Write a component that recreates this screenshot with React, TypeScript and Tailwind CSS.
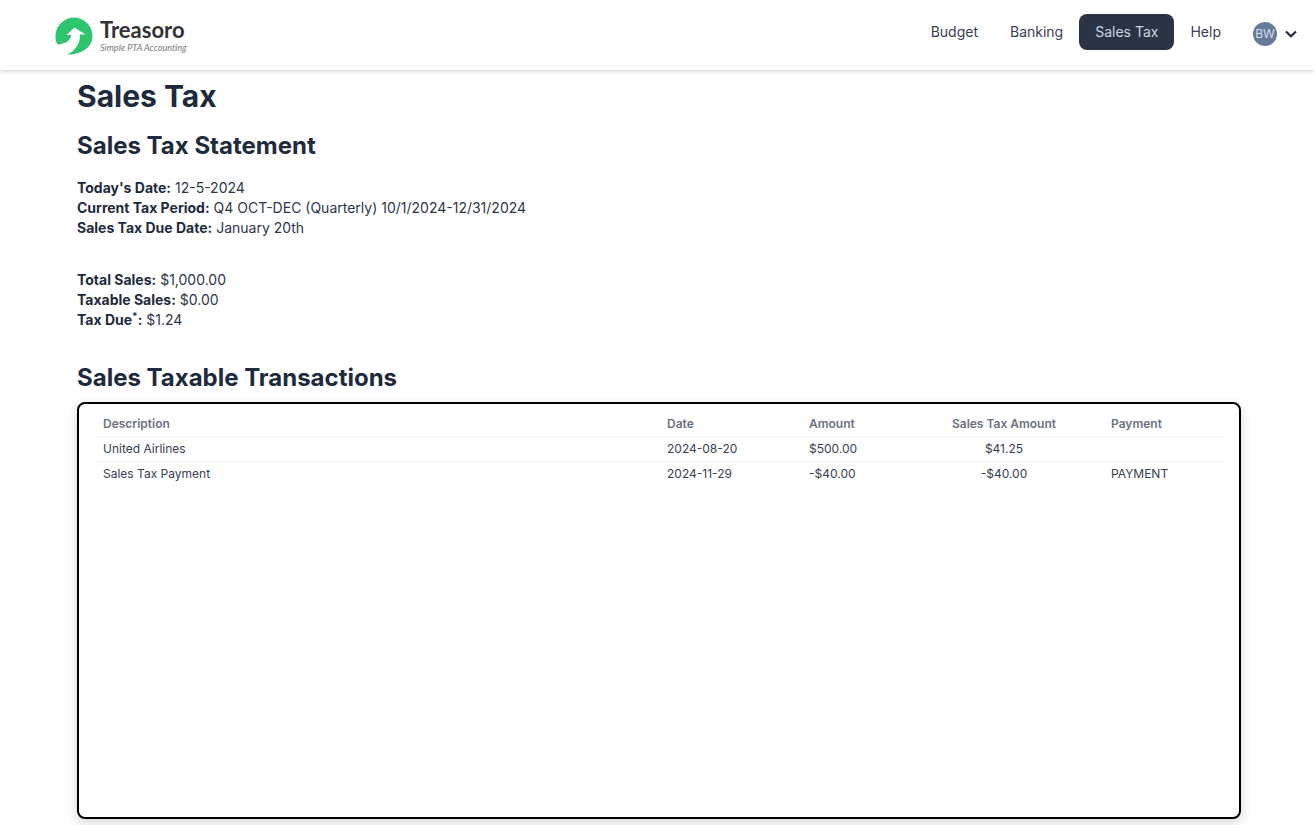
import React from "react";

function Logo() {
  return (
    <div className="flex items-center gap-[7px] mt-[2px]">
      <svg width="38" height="38" viewBox="0 0 38 38">
        <path fill="#2fc46e" d="M12 37.500C22 38 37.500 33 37.500 19A18.500 18.500 0 0 0 .5 19C.5 22 1 25 2.500 27.500C8 27 16 25 16 18L11.500 18L19.500 10.500L30.500 17.500L25 17.500C25.500 27 19 35 12 37.500Z" />
      </svg>
      <div className="flex flex-col -mt-[2px]">
        <span className="text-[22px] leading-[24px] font-bold text-[#333336] [font-family:'Lato',sans-serif]">Treasoro</span>
        <span className="text-[9.1px] leading-[11px] italic text-[#77797c] [font-family:'Lato',sans-serif]">Simple PTA Accounting</span>
      </div>
    </div>
  );
}

function NavItem({ label, active }: { label: string; active?: boolean }) {
  return (
    <a className={active ? "rounded-lg bg-[#2a3444] px-4 h-9 flex items-center text-sm text-[#cbd5e0]" : "px-4 h-9 flex items-center text-sm text-[#374151]"}>
      {label}
    </a>
  );
}

const rows = [
  { d: "United Airlines", date: "2024-08-20", a: "$500.00", s: "$41.25", p: "" },
  { d: "Sales Tax Payment", date: "2024-11-29", a: "-$40.00", s: "-$40.00", p: "PAYMENT" },
];

export default function App() {
  return (
    <div className="h-[825px] overflow-hidden bg-white text-[#1e2b3c] [font-family:'Inter',sans-serif]">
      <header className="h-[70px] bg-white shadow-[0_1px_4px_rgba(0,0,0,0.2)] flex items-center justify-between pl-[55px] pr-[18px] relative">
        <Logo />
        <nav className="flex items-center mb-[6px]">
          <NavItem label="Budget" />
          <NavItem label="Banking" />
          <NavItem label="Sales Tax" active />
          <NavItem label="Help" />
          <div className="flex items-center ml-4 gap-[8px] mt-[4px]">
            <div className="w-6 h-6 rounded-full bg-[#667a9a] flex items-center justify-center text-xs text-[#d6dce6]">BW</div>
            <svg width="12" height="8" viewBox="0 0 12 8" fill="none" stroke="#1f2937" strokeWidth="2.2"><path d="M1 1.500L6 6.200L11 1.500" /></svg>
          </div>
        </nav>
      </header>
      <main className="pl-[77px] pr-[74px]">
        <h1 className="mt-[8px] text-[30px] leading-9 font-bold">Sales Tax</h1>
        <h2 className="mt-[16px] text-2xl leading-8 font-bold">Sales Tax Statement</h2>
        <div className="mt-[16px] text-sm leading-5 text-[#2d3748]">
          <div><b className="font-bold text-[#1e2b3c]">Today's Date:</b> 12-5-2024</div>
          <div><b className="font-bold text-[#1e2b3c]">Current Tax Period:</b> Q4 OCT-DEC (Quarterly) 10/1/2024-12/31/2024</div>
          <div><b className="font-bold text-[#1e2b3c]">Sales Tax Due Date:</b> January 20th</div>
        </div>
        <div className="mt-[32px] text-sm leading-5 text-[#2d3748]">
          <div><b className="font-bold text-[#1e2b3c]">Total Sales:</b> $1,000.00</div>
          <div><b className="font-bold text-[#1e2b3c]">Taxable Sales:</b> $0.00</div>
          <div><b className="font-bold text-[#1e2b3c]">Tax Due<sup className="text-[10px] leading-none">*</sup>:</b> $1.24</div>
        </div>
        <h2 className="mt-[32px] text-2xl leading-8 font-bold">Sales Taxable Transactions</h2>
        <div className="mt-[8px] h-[417px] rounded-lg border-2 border-black bg-white pt-[8px] pl-[17px] pr-[15px] shadow-[0_4px_12px_rgba(0,0,0,0.16)]">
          <table className="w-full table-fixed text-xs">
            <colgroup>
              <col className="w-[564px]" />
              <col className="w-[142px]" />
              <col className="w-[102px]" />
              <col className="w-[200px]" />
              <col />
            </colgroup>
            <thead>
              <tr className="h-[24px] border-b border-[#edf2f7] text-left text-[#6b7280]">
                <th className="px-[7px] font-semibold">Description</th>
                <th className="px-[7px] font-semibold">Date</th>
                <th className="px-[7px] font-semibold whitespace-nowrap">Amount</th>
                <th className="px-[7px] text-center font-semibold">Sales Tax Amount</th>
                <th className="px-[7px] font-semibold">Payment</th>
              </tr>
            </thead>
            <tbody className="text-[#374151]">
              {rows.map((r) => (
                <tr key={r.d} className="h-[25px] border-b border-[#edf2f7] last:border-b-0">
                  <td className="px-[7px]">{r.d}</td>
                  <td className="px-[7px]">{r.date}</td>
                  <td className="px-[7px]">{r.a}</td>
                  <td className="px-[7px] text-center">{r.s}</td>
                  <td className="px-[7px]">{r.p}</td>
                </tr>
              ))}
            </tbody>
          </table>
        </div>
      </main>
    </div>
  );
}
